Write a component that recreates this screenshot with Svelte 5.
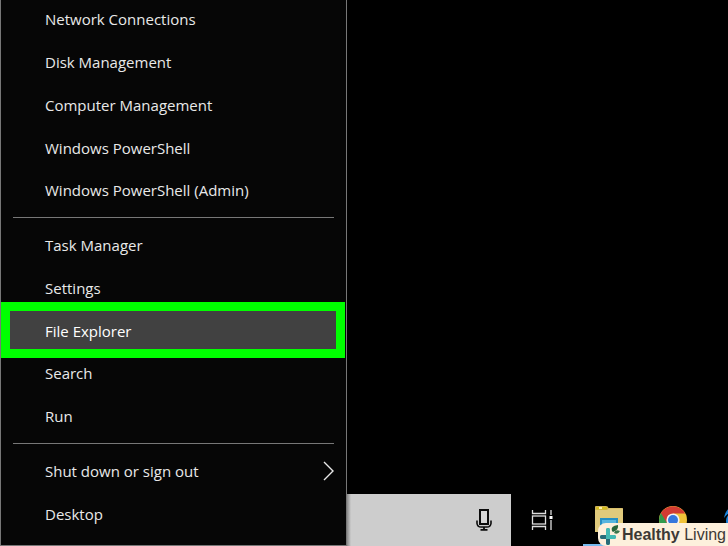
<script>
  const groups = [
    ['Network Connections', 'Disk Management', 'Computer Management', 'Windows PowerShell', 'Windows PowerShell (Admin)'],
    ['Task Manager', 'Settings', 'File Explorer', 'Search', 'Run'],
    ['Shut down or sign out', 'Desktop']
  ];
  let selected = $state('File Explorer');
</script>

<main class="screen">
  <nav class="menu" aria-label="Power user menu">
    {#each groups as group, i}
      {#if i > 0}<hr />{/if}
      {#each group as item}
        <button class="item" class:selected={item === selected} onclick={() => (selected = item)}>
          <span>{item}</span>
          {#if item === 'Shut down or sign out'}
            <svg class="chevron" width="11" height="20" viewBox="0 0 11 20" aria-hidden="true">
              <path d="M1 1L10 10L1 19" fill="none" stroke="#e8e8e8" stroke-width="1.4" />
            </svg>
          {/if}
        </button>
      {/each}
    {/each}
  </nav>

  <div class="desktop">
    <footer class="taskbar">
      <div class="search">
        <button class="mic" aria-label="Speak">
          <svg width="16" height="22" viewBox="0 0 16 22" aria-hidden="true">
            <rect x="4" y="1" width="8" height="14" fill="#d6d6d6" stroke="#0c0c0c" stroke-width="2" />
            <path d="M1 11.5V14.5Q1.5 18 5 18H11Q14.5 18 15 14.5V11.5" fill="none" stroke="#0c0c0c" stroke-width="1.6" />
            <path d="M8 18V21M4.5 20.8H11.5" stroke="#0c0c0c" stroke-width="1.8" />
          </svg>
        </button>
      </div>
      <button class="app" aria-label="Task View">
        <svg width="22" height="22" viewBox="0 0 22 22" fill="none" stroke="#dedede" stroke-width="1.3" aria-hidden="true">
          <path d="M1.500 1V4.500H14.500V1M1.500 21V17.500H14.500V21" />
          <rect x="1.500" y="7" width="13" height="8" />
          <path d="M20 1V6M20 11V21" />
          <rect x="18.500" y="7" width="3" height="3" fill="#fff" stroke="none" />
        </svg>
      </button>
      <button class="app folder" aria-label="File Explorer">
        <svg width="29" height="26" viewBox="0 0 29 26" aria-hidden="true">
          <path d="M0 1Q0 0 1 0H11Q13 0 13.5 2H27Q28 2 28 3V25H0Z" fill="#d0b45a" />
          <path d="M0 4H12L14 2.5H28V26H0Z" fill="#e0ca7c" />
          <rect x="1" y="1" width="11" height="2.5" rx="1" fill="#d4bd20" />
          <rect x="4" y="1" width="3" height="2" fill="#fff0ae" />
          <path d="M5 12H23V26H5Z" fill="#258fc4" />
          <path d="M7 14H21V26H7Z" fill="#56b5df" />
        </svg>
      </button>
      <button class="app chrome" aria-label="Google Chrome">
        <svg width="28" height="28" viewBox="0 0 28 28" aria-hidden="true">
          <circle cx="14" cy="14" r="14" fill="#f0c238" />
          <path d="M14 14L1.9 7A14 14 0 0 0 14 28L20 17Z" fill="#329b4c" />
          <path d="M14 14L8 17L1.9 7A14 14 0 0 1 26.1 7.5H14Z" fill="#d23b32" />
          <circle cx="14" cy="14" r="6.6" fill="#f4f4f4" />
          <circle cx="14" cy="14" r="5" fill="#3577dc" />
        </svg>
      </button>
      <button class="app edge" aria-label="Microsoft Edge">
        <svg width="28" height="28" viewBox="0 0 28 28" aria-hidden="true">
          <path d="M1 12Q3 0 14 0Q27 0 28 15H10Q10 24 25 21V26Q3 32 3 15Q3 8 12 5Q5 6 1 12Z" fill="#1683dc" />
        </svg>
      </button>
    </footer>
    <div class="brand">
      <svg width="20" height="20" viewBox="0 0 20 20" aria-hidden="true">
        <path d="M8 5V18M2 12H14" stroke="#27a6a4" stroke-width="4" stroke-linecap="round" />
        <path d="M8 12V18M2 12H8" stroke="#286b78" stroke-width="4" stroke-linecap="round" />
        <path d="M8 5V12H14" fill="none" stroke="#43bab4" stroke-width="4" stroke-linecap="round" />
        <path d="M12 6Q10 1 18 0Q19 5 13 7Z" fill="#28653b" />
        <path d="M14 8Q15 4 20 6Q18 10 14 8Z" fill="#39754a" />
      </svg>
      <span><b>Healthy</b> Living</span>
    </div>
  </div>
</main>

<style>
  :global(body) {
    margin: 0;
    background: #000;
    overflow: hidden;
  }
  .screen {
    display: flex;
    min-height: 100vh;
    font-family: 'Open Sans', 'Noto Sans', sans-serif;
  }
  button {
    margin: 0;
    padding: 0;
    border: 0;
    background: none;
    font: inherit;
    color: inherit;
  }
  .menu {
    box-sizing: border-box;
    width: 347px;
    flex: none;
    display: flex;
    flex-direction: column;
    margin-top: -2px;
    padding-bottom: 10px;
    border: solid #777;
    border-width: 0 1px 1px;
    background: #060606;
    color: #e9e9e9;
    font-size: 15px;
    line-height: 20px;
  }
  .item {
    position: relative;
    flex: 1;
    display: flex;
    align-items: center;
    justify-content: space-between;
    padding: 0 12px 0 44px;
    text-align: left;
    white-space: nowrap;
  }
  .selected {
    color: #fff;
  }
  .selected span {
    position: relative;
    z-index: 1;
  }
  .selected::before {
    content: '';
    position: absolute;
    inset: -7px 1px -6px 0;
    border: 9px solid #0f0;
    background: #414141;
  }
  hr {
    box-sizing: border-box;
    width: auto;
    height: 12px;
    margin: 0 12px;
    border: 0;
    background: linear-gradient(#777, #777) center / 100% 1px no-repeat;
  }
  .desktop {
    position: relative;
    flex: 1;
    min-width: 0;
    display: flex;
    flex-direction: column;
    justify-content: flex-end;
    overflow: hidden;
  }
  .taskbar {
    display: flex;
    height: 52px;
  }
  .search {
    box-sizing: border-box;
    width: 164px;
    flex: none;
    display: flex;
    align-items: center;
    justify-content: flex-end;
    padding-right: 19px;
    background: linear-gradient(90deg, #888, #cdcdcd 4px);
  }
  .mic {
    display: flex;
  }
  .app {
    box-sizing: border-box;
    width: 62px;
    flex: none;
    display: flex;
    align-items: center;
    justify-content: center;
  }
  .folder {
    width: 52px;
    margin-left: 10px;
    border-bottom: 2px solid #76b9ed;
  }
  .chrome {
    margin-left: 7px;
  }
  .edge {
    width: 52px;
    margin-left: 7px;
  }
  .brand {
    position: absolute;
    right: 0;
    bottom: 0;
    display: flex;
    align-items: center;
    gap: 2px;
    height: 23px;
    padding: 0 2px;
    border-radius: 8px 0 0 8px;
    background: #fdf0dc;
    color: #3c3935;
    font-family: 'Liberation Sans', Arial, sans-serif;
    font-size: 16px;
    line-height: 20px;
    white-space: nowrap;
  }
</style>
